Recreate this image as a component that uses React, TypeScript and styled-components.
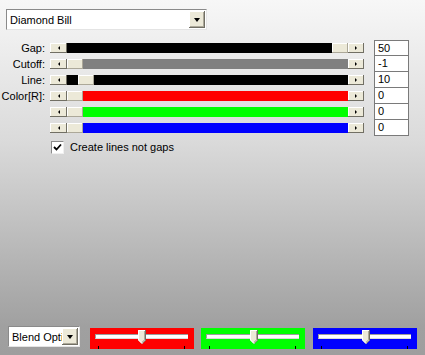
import React from "react";
import styled, { createGlobalStyle } from "styled-components";

const Global = createGlobalStyle`
  html, body { margin: 0; padding: 0; }
  body {
    width: 425px; height: 355px; overflow: hidden;
    font-family: "Liberation Sans", Arial, sans-serif;
    font-size: 11px; color: #000;
  }
`;

const Page = styled.div`
  width: 425px;
  height: 355px;
  box-sizing: border-box;
  background: linear-gradient(to bottom, #f7f7f7 0%, #dadada 40%, #a0a0a0 92%, #9e9e9e 100%);
  display: flex;
  flex-direction: column;
  padding: 9px 0 6px 0;
`;

const Combo = styled.div<{ $w: number; $h: number }>`
  width: ${(p) => p.$w}px;
  height: ${(p) => p.$h}px;
  box-sizing: border-box;
  background: #fff;
  border: 1px solid;
  border-color: #8a8a8a #e4e4e4 #e4e4e4 #8a8a8a;
  display: flex;
  align-items: center;
  padding: 0 1px 0 3px;
`;

const ComboText = styled.span`
  flex: 1;
  overflow: hidden;
  white-space: nowrap;
  line-height: 14px;
`;

const RaisedButton = styled.div<{ $w: number; $h: number }>`
  width: ${(p) => p.$w}px;
  height: ${(p) => p.$h}px;
  box-sizing: border-box;
  background: #ece9d8;
  box-shadow: inset -1px -1px 0 #716f64, inset 1px 1px 0 #ffffff, inset -2px -2px 0 #aca899;
  display: flex;
  align-items: center;
  justify-content: center;
  flex: none;
`;

const DownTri = styled.span`
  width: 0;
  height: 0;
  border-left: 3.5px solid transparent;
  border-right: 3.5px solid transparent;
  border-top: 4px solid #000;
  margin-top: 1px;
`;

const TopCombo = styled.div`
  margin-left: 6px;
`;

const Rows = styled.div`
  margin-top: 10px;
  display: flex;
  flex-direction: column;
`;

const Row = styled.div`
  display: flex;
  align-items: center;
  height: 16px;
`;

const Label = styled.div`
  width: 45px;
  text-align: right;
  white-space: nowrap;
  line-height: 12px;
`;

const ScrollBar = styled.div`
  display: flex;
  width: 314px;
  height: 10px;
  margin-left: 5px;
`;

const ArrowBtn = styled.div<{ $w: number }>`
  width: ${(p) => p.$w}px;
  height: 10px;
  box-sizing: border-box;
  background: #ece9d8;
  box-shadow: inset -1px -1px 0 #716f64, inset 1px 1px 0 #ffffff;
  display: flex;
  align-items: center;
  justify-content: center;
  flex: none;
`;

const LeftTri = styled.span`
  width: 0;
  height: 0;
  border-top: 2px solid transparent;
  border-bottom: 2px solid transparent;
  border-right: 2px solid #000;
`;

const RightTri = styled.span`
  width: 0;
  height: 0;
  border-top: 2px solid transparent;
  border-bottom: 2px solid transparent;
  border-left: 2px solid #000;
`;

const Track = styled.div<{ $c: string }>`
  flex: 1;
  position: relative;
  background: ${(p) => p.$c};
`;

const Thumb = styled.div`
  position: absolute;
  top: 0;
  width: 16px;
  height: 10px;
  box-sizing: border-box;
  background: #ece9d8;
  box-shadow: inset -1px -1px 0 #aca899, inset 1px 1px 0 #ffffff;
`;

const ValueBox = styled.div<{ $first?: boolean }>`
  width: 35px;
  height: 16px;
  margin-left: 10px;
  box-sizing: border-box;
  background: #fff;
  border: 1px solid #7a7a7a;
  border-top-width: ${(p) => (p.$first ? 1 : 0)}px;
  padding-left: 3px;
  line-height: 14px;
`;

const CheckRow = styled.label`
  margin-top: 4px;
  margin-left: 51px;
  display: flex;
  align-items: center;
  gap: 6px;
  height: 14px;
`;

const CheckBox = styled.span`
  width: 13px;
  height: 13px;
  box-sizing: border-box;
  background: #fff;
  border: 1px solid;
  border-color: #8a8a8a #f0f0f0 #f0f0f0 #8a8a8a;
  display: flex;
  align-items: center;
  justify-content: center;
`;

const Spacer = styled.div`
  flex: 1;
`;

const BottomBar = styled.div`
  display: flex;
  align-items: flex-end;
  padding-left: 8px;
`;

const BlendCombo = styled.div`
  margin-bottom: 2px;
`;

const ColorPanel = styled.div<{ $c: string; $ml: number }>`
  position: relative;
  width: 104px;
  height: 21px;
  margin-left: ${(p) => p.$ml}px;
  background: ${(p) => p.$c};
`;

const SliderGroove = styled.div`
  position: absolute;
  left: 5px;
  top: 6px;
  width: 93px;
  height: 5px;
  box-sizing: border-box;
  background: #fff;
  border-top: 1px solid #9d9d9d;
  border-left: 1px solid #9d9d9d;
  border-bottom: 1px solid #dcdcdc;
`;

const SliderThumb = styled.svg`
  position: absolute;
  top: 2px;
`;

const Tick = styled.span`
  position: absolute;
  bottom: 0;
  width: 1px;
  height: 3px;
  background: #000;
`;

type SliderDef = { label: string; color: string; pos: number; value: string };

const sliders: SliderDef[] = [
  { label: "Gap:", color: "#000000", pos: 1, value: "50" },
  { label: "Cutoff:", color: "#808080", pos: 0, value: "-1" },
  { label: "Line:", color: "#000000", pos: 0.042, value: "10" },
  { label: "Color[R]:", color: "#ff0000", pos: 0, value: "0" },
  { label: "", color: "#00ff00", pos: 0, value: "0" },
  { label: "", color: "#0000ff", pos: 0, value: "0" },
];

const TRACK_RANGE = 281 - 16;

function ThumbIcon({ left }: { left: number }) {
  return (
    <SliderThumb width="8" height="14" viewBox="0 0 8 14" style={{ left }}>
      <path d="M0 0 H8 V10 L4 14 L0 10 Z" fill="#ece9d8" />
      <path d="M0.5 10 V0.5 H7" stroke="#ffffff" fill="none" />
      <path d="M7.5 0 V10.2 L4 13.7" stroke="#716f64" fill="none" />
      <path d="M6.5 1 V9.8 L4 12.3" stroke="#aca899" fill="none" />
      <path d="M0.5 10 L4 13.5" stroke="#ffffff" fill="none" />
    </SliderThumb>
  );
}

function ColorSlider({ color, ml, thumb }: { color: string; ml: number; thumb: number }) {
  return (
    <ColorPanel $c={color} $ml={ml}>
      <SliderGroove />
      <ThumbIcon left={thumb} />
      <Tick style={{ left: 8 }} />
      <Tick style={{ left: 94 }} />
    </ColorPanel>
  );
}

export default function App() {
  return (
    <>
      <Global />
      <Page>
        <TopCombo>
          <Combo $w={201} $h={21}>
            <ComboText>Diamond Bill</ComboText>
            <RaisedButton $w={16} $h={17}>
              <DownTri />
            </RaisedButton>
          </Combo>
        </TopCombo>
        <Rows>
          {sliders.map((s, i) => (
            <Row key={i}>
              <Label>{s.label}</Label>
              <ScrollBar>
                <ArrowBtn $w={17}>
                  <LeftTri />
                </ArrowBtn>
                <Track $c={s.color}>
                  <Thumb style={{ left: Math.round(s.pos * TRACK_RANGE) }} />
                </Track>
                <ArrowBtn $w={16}>
                  <RightTri />
                </ArrowBtn>
              </ScrollBar>
              <ValueBox $first={i === 0}>{s.value}</ValueBox>
            </Row>
          ))}
        </Rows>
        <CheckRow>
          <CheckBox>
            <svg width="9" height="9" viewBox="0 0 9 9">
              <path d="M1 4 L3.5 6.5 L8 1.5" stroke="#000" strokeWidth="1.8" fill="none" />
            </svg>
          </CheckBox>
          <span>Create lines not gaps</span>
        </CheckRow>
        <Spacer />
        <BottomBar>
          <BlendCombo>
            <Combo $w={72} $h={21}>
              <ComboText>Blend Options</ComboText>
              <RaisedButton $w={16} $h={17}>
                <DownTri />
              </RaisedButton>
            </Combo>
          </BlendCombo>
          <ColorSlider color="#ff0000" ml={10} thumb={48} />
          <ColorSlider color="#00ff00" ml={7} thumb={49} />
          <ColorSlider color="#0000ff" ml={8} thumb={49} />
        </BottomBar>
      </Page>
    </>
  );
}
